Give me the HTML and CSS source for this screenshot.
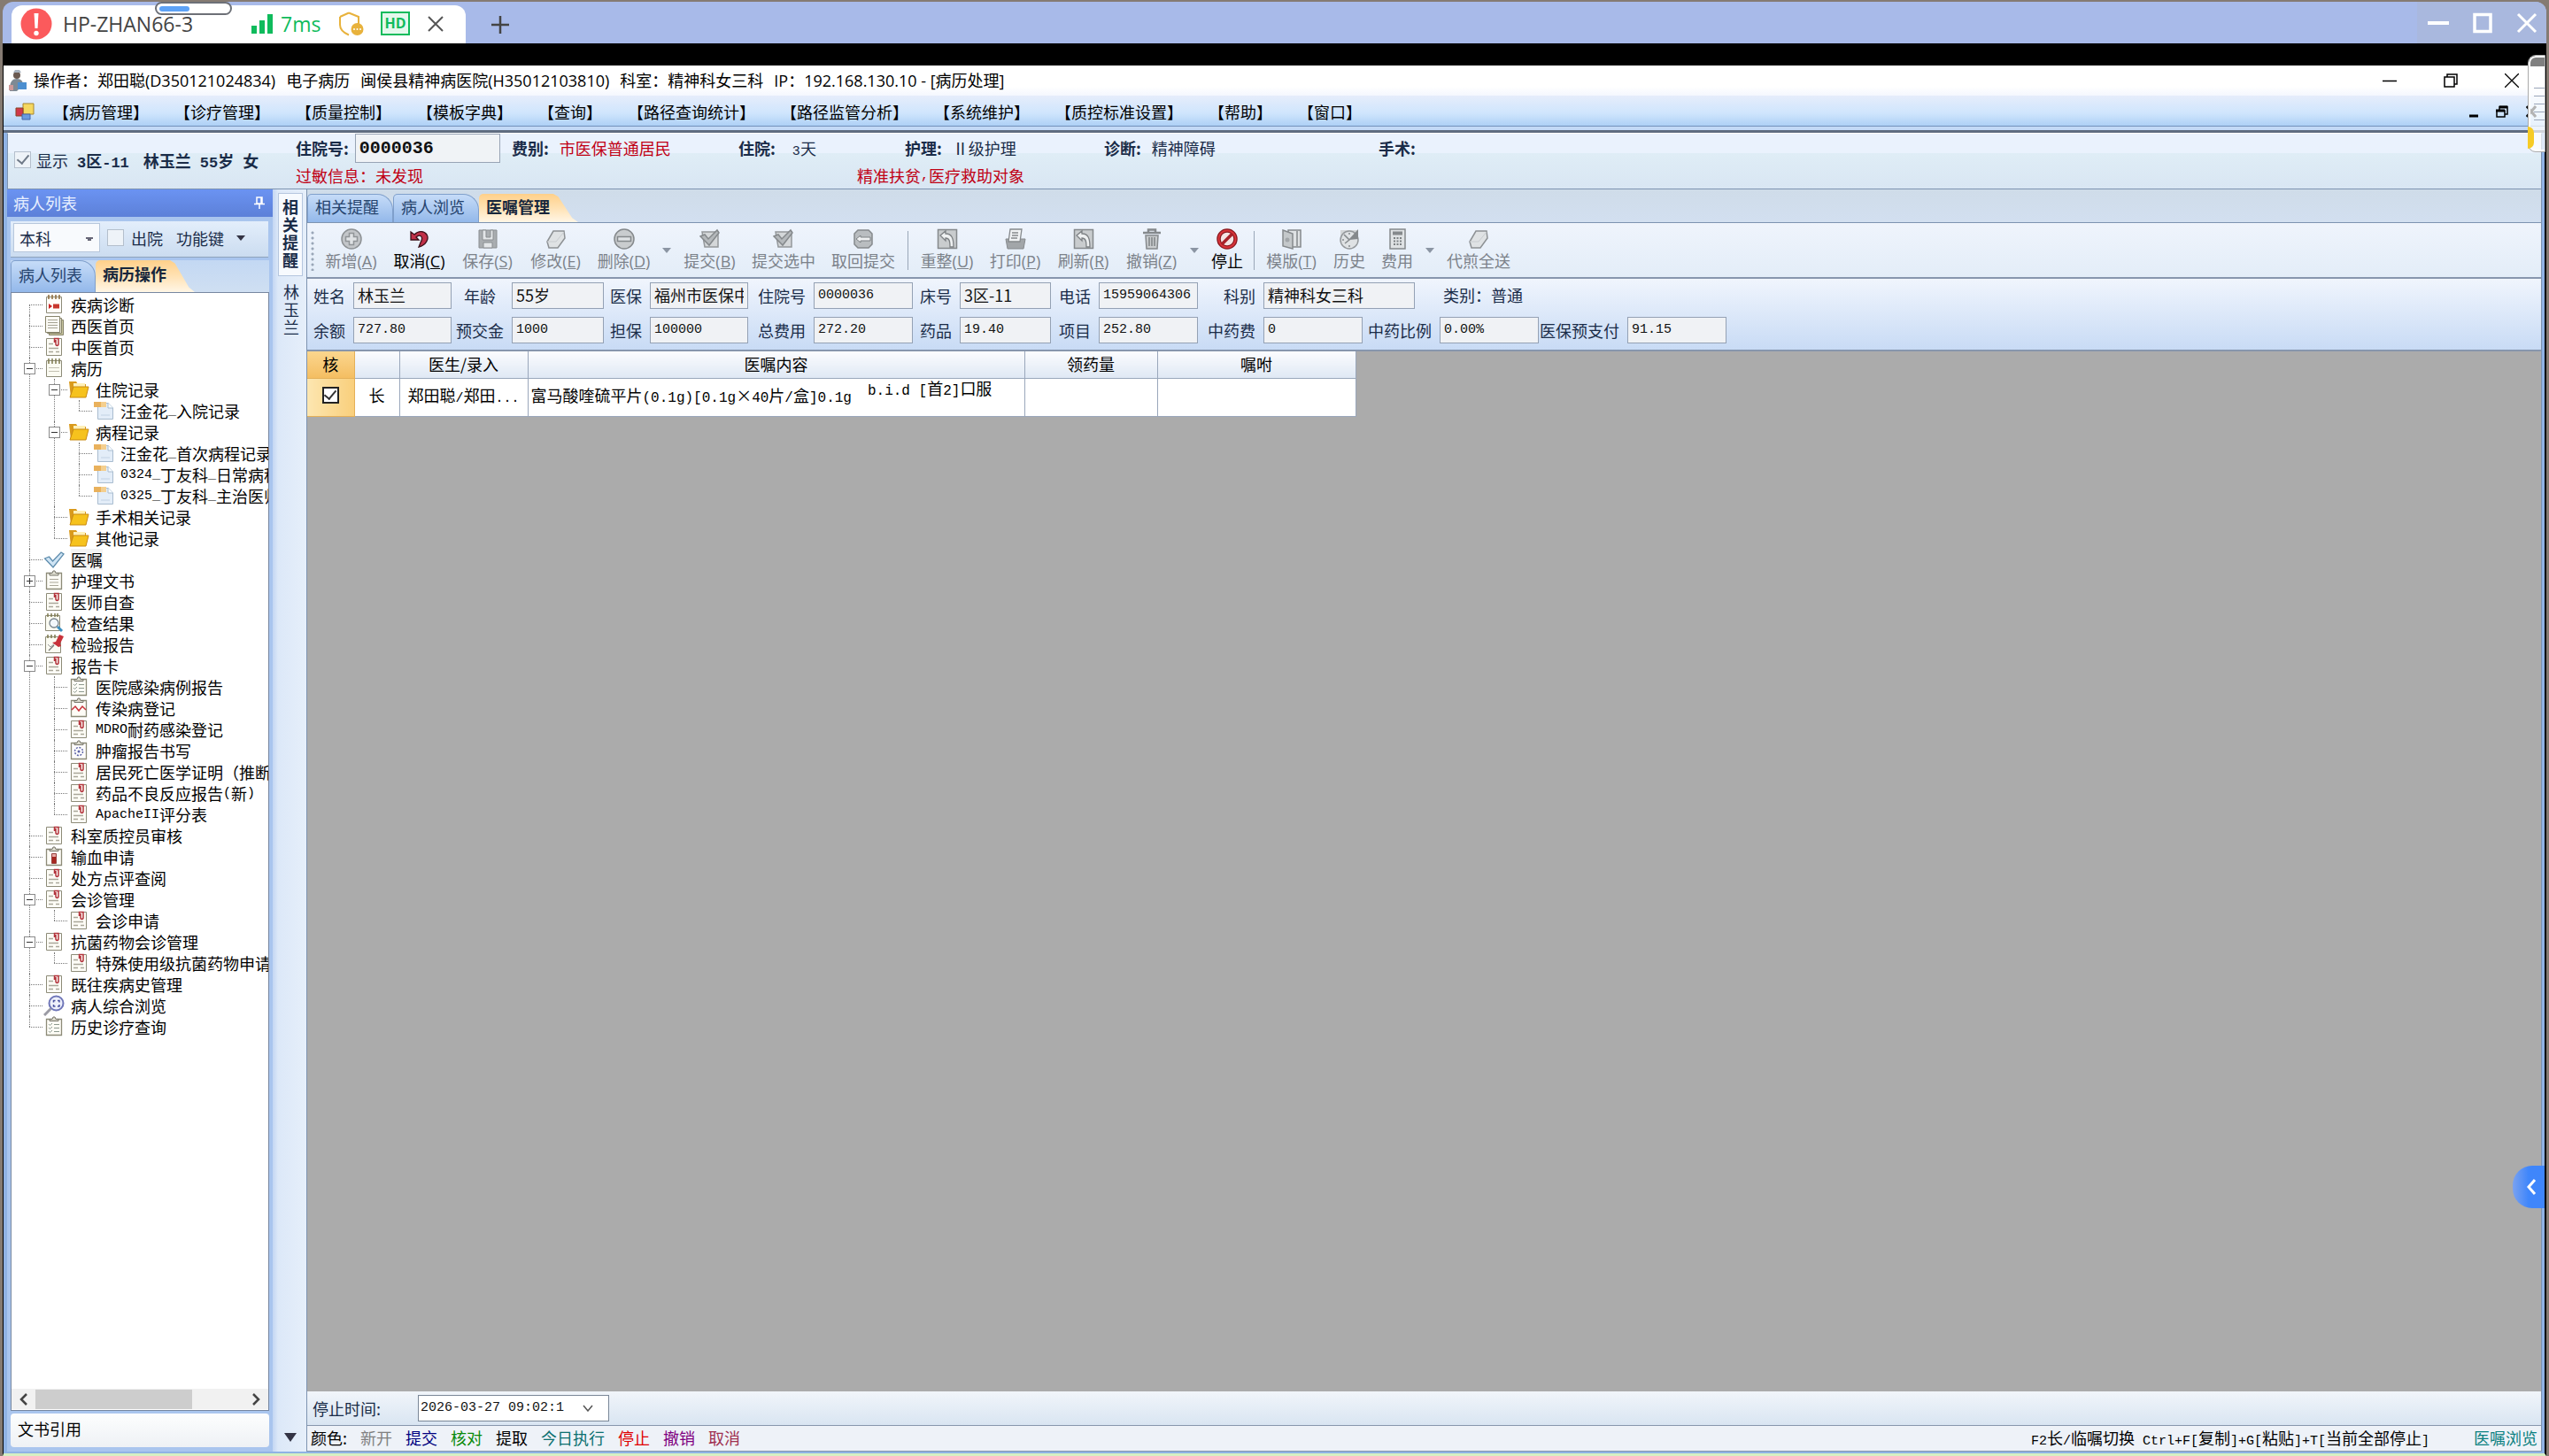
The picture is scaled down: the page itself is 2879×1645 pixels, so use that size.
FILE: index.html
```html
<!DOCTYPE html>
<html lang="zh-CN">
<head>
<meta charset="utf-8">
<title>电子病历 - 病历处理</title>
<link rel="stylesheet" href="styles.css">
</head>
<body>
<svg class="sprite" aria-hidden="true">
  <symbol id="i-diag" viewBox="0 0 24 24"><path d="M3.500 3.500h17v18h-17z" fill="#fffdf8" stroke="#8d8b78"/><path d="M6 1v5M10 1v5M14 1v5M18 1v5" stroke="#8a6a3a" stroke-width="1.500"/><path d="M6 11l4 3-4 3z" fill="#c22"/><path d="M11 11.500h7v5h-7z" fill="#c8382c"/></symbol>
  <symbol id="i-pages" viewBox="0 0 24 24"><path d="M6.500 5.500h16v17h-16z" fill="#c9c7a0" stroke="#86836a"/><path d="M4.500 3.500h16v17h-16z" fill="#e4e2cf" stroke="#86836a"/><path d="M2.500 1.500h16v18h-16z" fill="#fbfaf4" stroke="#86836a"/><path d="M5 5.500h11M5 8.500h11M5 11.500h11M5 14.500h11" stroke="#a5a293"/></symbol>
  <symbol id="i-clip" viewBox="0 0 24 24"><path d="M3.500 2.500h17v19h-17z" fill="#fdfcf6" stroke="#8d8b78"/><path d="M6 8.500h5M6 13.500h11M6 17.500h5M14 17.500h4" stroke="#aaa79a" stroke-width="1.500"/><path d="M12.500 7V2.500h4.500V8.500c0 2.500-3 2.500-3 0V4" fill="none" stroke="#b3343c" stroke-width="1.500"/></symbol>
  <symbol id="i-note" viewBox="0 0 24 24"><path d="M3.500 3.500h17v18h-17z" fill="#fbfbf2" stroke="#8d8b78"/><path d="M6 1v6M10 1v6M14 1v6M18 1v6" stroke="#7d7a4e" stroke-width="1.500"/><path d="M6 11.500h12M6 15.500h12" stroke="#c3c1b2"/></symbol>
  <symbol id="i-folder" viewBox="0 0 24 24"><path d="M1 3h8l2 3h9v5H6L3 21z" fill="#d99a1c"/><path d="M6 5h13v5H6z" fill="#fff0b8"/><path d="M6 9h17l-3 12H2z" fill="#f6c21d" stroke="#c98a10"/></symbol>
  <symbol id="i-doc" viewBox="0 0 24 24"><path d="M5.500 3.500h12l5 5v13h-17z" fill="#e3edf8" stroke="#a9bccf"/><path d="M17 3v6h6" fill="#f7fbff" stroke="#a9bccf"/><path d="M1 2h14v6H1z" fill="#e9b15c"/><path d="M9 2h6v6H9z" fill="#f4cf8f"/><path d="M9 17h10" stroke="#c2d2e4"/></symbol>
  <symbol id="i-check" viewBox="0 0 24 24"><path d="M1.500 11l5-2 4 5L20 4l3 2-12 15z" fill="#cfe4f4" stroke="#5d8cad" stroke-width="1.300"/></symbol>
  <symbol id="i-board" viewBox="0 0 24 24"><path d="M3.500 3.500h17v18h-17z" fill="#fdfcf6" stroke="#8d8b78" stroke-width="1.300"/><path d="M7 6V3.500h3l1-2.500h2l1 2.500h3V6z" fill="#deddd0" stroke="#77756a"/><path d="M7 10.500h10M7 14h10M7 17.500h10" stroke="#aaa79a"/></symbol>
  <symbol id="i-find" viewBox="0 0 24 24"><path d="M2.500 3.500h16v17h-16z" fill="#fbfbf2" stroke="#8d8b78"/><path d="M5 1v4M9 1v4M13 1v4M16 1v4" stroke="#7d7a4e" stroke-width="1.500"/><circle cx="12" cy="12" r="5" fill="#f2f7fb" stroke="#78838c" stroke-width="1.300"/><path d="M16 16l5 5" stroke="#3d8fbf" stroke-width="3"/></symbol>
  <symbol id="i-pin" viewBox="0 0 24 24"><path d="M2.500 3.500h17v18h-17z" fill="#fbfbf2" stroke="#8d8b78"/><path d="M5 1v4M9 1v4M13 1v4" stroke="#7d7a4e" stroke-width="1.500"/><path d="M5 12l3 3 5-4" fill="none" stroke="#999"/><path d="M6 19l6-6" stroke="#777" stroke-width="1.300"/><path d="M10 10l4-1 4-8 5 2-4 8 1 3-3 1z" fill="#c8323a"/></symbol>
  <symbol id="i-list" viewBox="0 0 24 24"><path d="M3.500 3.500h17v18h-17z" fill="#fdfcf6" stroke="#8d8b78" stroke-width="1.300"/><path d="M7 5.500V3.500h3l1-2.500h2l1 2.500h3v2z" fill="#deddd0" stroke="#77756a"/><path d="M12 9.500h6M12 13.500h6M12 17.500h6M6 9l1.500 1.500L10 8M6 13l1.500 1.500L10 12M6 17l1.500 1.500L10 16" fill="none" stroke="#8d9a90"/></symbol>
  <symbol id="i-wave" viewBox="0 0 24 24"><path d="M3.500 3.500h17v18h-17z" fill="#fdfcf6" stroke="#8d8b78" stroke-width="1.300"/><path d="M7 5.500V3.500h3l1-2.500h2l1 2.500h3v2z" fill="#deddd0" stroke="#77756a"/><path d="M4 14l4-4 4 5 4-5 4 4" fill="none" stroke="#c8323a" stroke-width="1.500"/></symbol>
  <symbol id="i-virus" viewBox="0 0 24 24"><path d="M3.500 3.500h17v18h-17z" fill="#fdfcfc" stroke="#8d8b78" stroke-width="1.300"/><path d="M7 5.500V3.500h3l1-2.500h2l1 2.500h3v2z" fill="#deddd0" stroke="#77756a"/><circle cx="12" cy="13" r="4.500" fill="none" stroke="#5d64a8" stroke-width="1.500" stroke-dasharray="2 1.500"/><circle cx="12" cy="13" r="1.500" fill="#5d64a8"/></symbol>
  <symbol id="i-blood" viewBox="0 0 24 24"><path d="M3.500 3.500h17v18h-17z" fill="#fdfcf6" stroke="#8d8b78" stroke-width="1.300"/><path d="M7 5.500V3.500h3l1-2.500h2l1 2.500h3v2z" fill="#deddd0" stroke="#77756a"/><path d="M9.500 8.500h5v11h-5z" fill="#e8a9a5" stroke="#96403c"/><path d="M10 12h4v7h-4z" fill="#a82620"/></symbol>
  <symbol id="i-lens" viewBox="0 0 24 24"><circle cx="14.500" cy="9.500" r="8" fill="#eef0fb" stroke="#6f76b8" stroke-width="2"/><path d="M8.500 15.500L1 23" stroke="#9a9aa4" stroke-width="3"/><path d="M11.500 8.500v-2h2M16 6.500h2v2M18 11v2h-2M13.500 13h-2v-2" fill="none" stroke="#4b53a0" stroke-width="1.500"/></symbol>
  <symbol id="i-add" viewBox="0 0 24 24"><circle cx="12" cy="12" r="11" fill="#c3c6c9" stroke="#8d9194" stroke-width="1.500"/><path d="M9.500 5.500h5v4h4v5h-4v4h-5v-4h-4v-5h4z" fill="#dfe2e4" stroke="#909497" stroke-width="1.500"/></symbol>
  <symbol id="i-undo" viewBox="0 0 24 24"><path d="M2 4v9h9l-3-3c4-4 9-1 5 6l-2 5c8-2 12-9 9-14-3-4-9-5-14 0z" fill="#c03048" stroke="#3b1018" stroke-width="1.300"/></symbol>
  <symbol id="i-save" viewBox="0 0 24 24"><path d="M2 2h20v20H2z" fill="#a9adb0" stroke="#8a8e91"/><path d="M6 2h4v8h5V2h3v11H6zM7 16h10v6H7z" fill="#e3e6e8" stroke="#8a8e91"/></symbol>
  <symbol id="i-erase" viewBox="0 0 24 24"><path d="M2 15l7-12h12l1 8-8 11H4z" fill="#dfe2e4" stroke="#8d9194" stroke-width="1.500"/><path d="M2 15h10l9-11" fill="none" stroke="#c9cdd0"/></symbol>
  <symbol id="i-minus" viewBox="0 0 24 24"><circle cx="12" cy="12" r="11" fill="#c9ccce" stroke="#85898c" stroke-width="1.500"/><path d="M4.500 9.500h15v5h-15z" fill="#dfe2e4" stroke="#85898c" stroke-width="1.500"/></symbol>
  <symbol id="i-submit" viewBox="0 0 24 24"><path d="M3 4h18v17H6z" fill="#d4d7d9" stroke="#94989b" stroke-width="1.500"/><path d="M1 9l5-2 4 5L20 2l2 3-11 14z" fill="#b4b8bb" stroke="#85898c" stroke-width="1.500"/></symbol>
  <symbol id="i-back" viewBox="0 0 24 24"><path d="M2 6l4-4h12l4 4v12l-4 4H6l-4-4z" fill="#b9bdc0" stroke="#85898c" stroke-width="1.500"/><path d="M4 12l5-4v2h11v4H9v2z" fill="#eef0f1" stroke="#7d8184"/></symbol>
  <symbol id="i-sheet" viewBox="0 0 24 24"><path d="M1.500 1.500h21v21h-21z" fill="#c9ccce" stroke="#85898c" stroke-width="1.500"/><path d="M4 8l6-5v3c7 0 9 5 9 15h-4c0-7-1-10-5-10v3z" fill="#eef0f1" stroke="#7d8184" stroke-width="1.300"/></symbol>
  <symbol id="i-print" viewBox="0 0 24 24"><path d="M1 12h22l-2 11H3z" fill="#a2a6a9" stroke="#85898c"/><path d="M6 1h13l-2 14H4z" fill="#f0f2f3" stroke="#85898c" stroke-width="1.300"/><path d="M8 5h7M8 8h7M7 11h7" stroke="#85898c" stroke-width="1.500"/></symbol>
  <symbol id="i-trash" viewBox="0 0 24 24"><path d="M2 5h20M8 4V1.500h8V4" fill="none" stroke="#85898c" stroke-width="2.500"/><path d="M5 8h14l-1 15H6z" fill="#c9ccce" stroke="#85898c" stroke-width="1.500"/><path d="M9 10v10M12 10v10M15 10v10" stroke="#7d8184" stroke-width="1.500"/></symbol>
  <symbol id="i-stop" viewBox="0 0 24 24"><circle cx="12" cy="12" r="9.500" fill="#f3e4e4" stroke="#8c1a20" stroke-width="4.500"/><circle cx="12" cy="12" r="9.500" fill="none" stroke="#d9343a" stroke-width="2"/><path d="M6 18L18 6" stroke="#a8222a" stroke-width="3.500"/></symbol>
  <symbol id="i-book" viewBox="0 0 24 24"><path d="M8 2h14v19H8z" fill="#dfe2e4" stroke="#85898c" stroke-width="1.500"/><path d="M2 2l11 4v17L2 20z" fill="#c4c8ca" stroke="#85898c" stroke-width="1.500"/><path d="M18 3v17" stroke="#85898c" stroke-width="1.500"/><circle cx="7" cy="13" r="2.500" fill="#a2a6a9"/></symbol>
  <symbol id="i-clock" viewBox="0 0 24 24"><path d="M2 2h20v14H2z" fill="#d4d7d9"/><circle cx="12" cy="13" r="10" fill="#dfe2e4" stroke="#94989b" stroke-width="1.500"/><path d="M11 13l11-12v11z" fill="#85898c"/><path d="M12 5v2M4 13h2M12 19v2M6 7l6 6-5 4" fill="none" stroke="#85898c" stroke-width="1.500"/></symbol>
  <symbol id="i-calc" viewBox="0 0 24 24"><path d="M4 1h17v22H4z" fill="#dfe2e4" stroke="#85898c" stroke-width="1.500"/><path d="M7 3.500h11v4H7z" fill="#85898c"/><path d="M8 11h9M8 14.500h9M8 18h9" stroke="#7d8184" stroke-width="2" stroke-dasharray="2 1.500"/></symbol>
</svg>

<div class="client">
  <header class="tabbar">
    <div class="session">
      <svg class="alert" viewBox="0 0 36 36"><circle cx="18" cy="18" r="17.500" fill="#fb5a5c"/><path d="M15.500 6h5l-1 17h-3z" fill="#fff"/><circle cx="18" cy="28.500" r="2.700" fill="#fff"/></svg>
      <span class="session-name">HP-ZHAN66-3</span>
      <svg class="signal" viewBox="0 0 24 22"><path d="M0 13h6v9H0zM9 7h6v15H9zM18 0h6v22h-6z" fill="#0fbb5c"/></svg>
      <span class="ping">7ms</span>
      <svg class="shield" viewBox="0 0 30 28"><path d="M12 1.500L23 6v9M2 6l10-4.500M2 6v9c0 6 4 9 10 11.500" fill="none" stroke="#e8b23c" stroke-width="2"/><circle cx="21.500" cy="20" r="7" fill="#e8b23c"/><circle cx="18" cy="20" r="1" fill="#fff"/><circle cx="21.500" cy="20" r="1" fill="#fff"/><circle cx="25" cy="20" r="1" fill="#fff"/></svg>
      <span class="hd">HD</span>
      <button class="plain" aria-label="关闭"><svg width="18" height="18" viewBox="0 0 18 18"><path d="M1 1l16 16M17 1L1 17" stroke="#555" stroke-width="2"/></svg></button>
    </div>
    <button class="plain newtab" aria-label="新建"><svg width="22" height="22" viewBox="0 0 22 22"><path d="M11 1v20M1 11h20" stroke="#444" stroke-width="2.500"/></svg></button>
    <div class="wincontrols">
      <button class="plain" aria-label="最小化"><svg width="24" height="24" viewBox="0 0 24 24"><path d="M0 12h24" stroke="#fff" stroke-width="4"/></svg></button>
      <button class="plain" aria-label="最大化"><svg width="24" height="24" viewBox="0 0 24 24"><path d="M3 2.500h18v19H3z" fill="none" stroke="#fff" stroke-width="3.500"/></svg></button>
      <button class="plain" aria-label="关闭窗口"><svg width="24" height="24" viewBox="0 0 24 24"><path d="M2 2l20 20M22 2L2 22" stroke="#fff" stroke-width="3"/></svg></button>
    </div>
    <div class="pill"><i></i></div>
  </header>

  <div class="remote">
    <div class="titlebar">
      <svg width="22" height="24" viewBox="0 0 22 24"><circle cx="10" cy="6" r="4" fill="#6b5a50"/><path d="M6 3h9l-2-3H8z" fill="#a9b4c0"/><path d="M2 22c0-9 3-12 8-12s7 3 7 7l-7 7H2z" fill="#7e8a94"/><path d="M11 14h10v8H11z" fill="#4c8fd0"/><path d="M1 17h5v6H1z" fill="#c99"/></svg>
      <h1><span>操作者：郑田聪(D350121024834)</span><span>电子病历</span><span>闽侯县精神病医院(H35012103810)</span><span>科室：精神科女三科</span><span>IP：192.168.130.10 - [病历处理]</span></h1>
      <div class="appcontrols">
        <button class="plain" aria-label="最小化"><svg width="16" height="16" viewBox="0 0 16 16"><path d="M0 8.500h16" stroke="#000" stroke-width="1.500"/></svg></button>
        <button class="plain" aria-label="还原"><svg width="16" height="16" viewBox="0 0 16 16"><path d="M1 4h11v11H1zM4 4V1h11v11h-3" fill="none" stroke="#000" stroke-width="1.500"/></svg></button>
        <button class="plain" aria-label="关闭"><svg width="16" height="16" viewBox="0 0 16 16"><path d="M0 0l16 16M16 0L0 16" stroke="#000" stroke-width="1.300"/></svg></button>
      </div>
    </div>

    <nav class="menubar">
      <svg width="22" height="20" viewBox="0 0 22 20"><path d="M9 1h12v12H9z" fill="#f5d860" stroke="#a8862c"/><path d="M1 6h8v9H1z" fill="#d0384a" stroke="#842"/><path d="M8 13h9v6H8z" fill="#6a9be0" stroke="#46a"/></svg>
      <button>【病历管理】</button><button>【诊疗管理】</button><button>【质量控制】</button><button>【模板字典】</button><button>【查询】</button><button>【路径查询统计】</button><button>【路径监管分析】</button><button>【系统维护】</button><button>【质控标准设置】</button><button>【帮助】</button><button>【窗口】</button>
      <div class="mdi">
        <svg width="10" height="14" viewBox="0 0 10 14"><path d="M0 12h10" stroke="#000" stroke-width="3"/></svg>
        <svg width="14" height="14" viewBox="0 0 14 14"><path d="M1 6h9v7H1zM4 6V1.500h9V10h-3" fill="none" stroke="#000" stroke-width="1.500"/><path d="M0 6h10M4 2h9" stroke="#000" stroke-width="3"/></svg>
        <svg width="12" height="14" viewBox="0 0 12 14"><path d="M1 1l10 12M11 1L1 13" stroke="#000" stroke-width="3"/></svg>
      </div>
    </nav>

    <section class="patient">
      <div class="who">
        <label><input type="checkbox" class="tick dim" checked> 显示</label>
        <b><span class="n">3</span>区<span class="n">-11</span></b><b>林玉兰</b><b><span class="n">55</span>岁</b><b>女</b>
      </div>
      <div class="facts">
        <div><label for="adm"><b>住院号:</b></label><input id="adm" class="adm" value="0000036"></div>
        <div><b>费别:</b><span class="red">市医保普通居民</span></div>
        <div><b>住院:</b><span class="stay"><span class="n">3</span>天</span></div>
        <div><b>护理:</b><span>Ⅱ级护理</span></div>
        <div><b>诊断:</b><span>精神障碍</span></div>
        <div><b>手术:</b></div>
        <div class="allergy red">过敏信息：未发现</div>
        <div class="aid red">精准扶贫<span class="n">,</span>医疗救助对象</div>
      </div>
    </section>

    <div class="work">
      <aside class="side">
        <div class="side-title"><span>病人列表</span><svg width="12" height="14" viewBox="0 0 12 14"><path d="M3 1h6v7H3zM0 8.500h12M6 9v5M8 1v7" fill="none" stroke="#fff" stroke-width="1.500"/></svg></div>
        <div class="side-tools">
          <select aria-label="科室"><option>本科</option></select>
          <label><input type="checkbox" class="tick dim"> 出院</label>
          <button class="fn">功能键<i class="tri"></i></button>
        </div>
        <div class="tabs side-tabs"><button class="tab">病人列表</button><button class="tab on">病历操作</button></div>
        <div class="treebox">
          <ul class="tree">
            <li><span class="row"><svg><use href="#i-diag"/></svg>疾病诊断</span></li>
            <li><span class="row"><svg><use href="#i-pages"/></svg>西医首页</span></li>
            <li><span class="row"><svg><use href="#i-clip"/></svg>中医首页</span></li>
            <li><button class="tg" aria-label="折叠"></button><span class="row"><svg><use href="#i-note"/></svg>病历</span>
              <ul>
                <li><button class="tg" aria-label="折叠"></button><span class="row"><svg><use href="#i-folder"/></svg>住院记录</span>
                  <ul><li><span class="row"><svg><use href="#i-doc"/></svg>汪金花<span class="n">_</span>入院记录</span></li></ul></li>
                <li><button class="tg" aria-label="折叠"></button><span class="row"><svg><use href="#i-folder"/></svg>病程记录</span>
                  <ul>
                    <li><span class="row"><svg><use href="#i-doc"/></svg>汪金花<span class="n">_</span>首次病程记录</span></li>
                    <li><span class="row"><svg><use href="#i-doc"/></svg><span class="n">0324_</span>丁友科<span class="n">_</span>日常病程</span></li>
                    <li><span class="row"><svg><use href="#i-doc"/></svg><span class="n">0325_</span>丁友科<span class="n">_</span>主治医师</span></li>
                  </ul></li>
                <li><span class="row"><svg><use href="#i-folder"/></svg>手术相关记录</span></li>
                <li><span class="row"><svg><use href="#i-folder"/></svg>其他记录</span></li>
              </ul></li>
            <li><span class="row"><svg><use href="#i-check"/></svg><span class="cur">医嘱</span></span></li>
            <li><button class="tg plus" aria-label="展开"></button><span class="row"><svg><use href="#i-board"/></svg>护理文书</span></li>
            <li><span class="row"><svg><use href="#i-clip"/></svg>医师自查</span></li>
            <li><span class="row"><svg><use href="#i-find"/></svg>检查结果</span></li>
            <li><span class="row"><svg><use href="#i-pin"/></svg>检验报告</span></li>
            <li><button class="tg" aria-label="折叠"></button><span class="row"><svg><use href="#i-clip"/></svg>报告卡</span>
              <ul>
                <li><span class="row"><svg><use href="#i-list"/></svg>医院感染病例报告</span></li>
                <li><span class="row"><svg><use href="#i-wave"/></svg>传染病登记</span></li>
                <li><span class="row"><svg><use href="#i-clip"/></svg><span class="n">MDRO</span>耐药感染登记</span></li>
                <li><span class="row"><svg><use href="#i-virus"/></svg>肿瘤报告书写</span></li>
                <li><span class="row"><svg><use href="#i-clip"/></svg>居民死亡医学证明（推断</span></li>
                <li><span class="row"><svg><use href="#i-clip"/></svg>药品不良反应报告<span class="n">(</span>新<span class="n">)</span></span></li>
                <li><span class="row"><svg><use href="#i-clip"/></svg><span class="n">ApacheII</span>评分表</span></li>
              </ul></li>
            <li><span class="row"><svg><use href="#i-clip"/></svg>科室质控员审核</span></li>
            <li><span class="row"><svg><use href="#i-blood"/></svg>输血申请</span></li>
            <li><span class="row"><svg><use href="#i-clip"/></svg>处方点评查阅</span></li>
            <li><button class="tg" aria-label="折叠"></button><span class="row"><svg><use href="#i-clip"/></svg>会诊管理</span>
              <ul><li><span class="row"><svg><use href="#i-clip"/></svg>会诊申请</span></li></ul></li>
            <li><button class="tg" aria-label="折叠"></button><span class="row"><svg><use href="#i-clip"/></svg>抗菌药物会诊管理</span>
              <ul><li><span class="row"><svg><use href="#i-clip"/></svg>特殊使用级抗菌药物申请</span></li></ul></li>
            <li><span class="row"><svg><use href="#i-clip"/></svg>既往疾病史管理</span></li>
            <li><span class="row"><svg><use href="#i-lens"/></svg>病人综合浏览</span></li>
            <li><span class="row"><svg><use href="#i-list"/></svg>历史诊疗查询</span></li>
          </ul>
          <div class="hscroll">
            <svg width="10" height="14" viewBox="0 0 10 14"><path d="M8 1L2 7l6 6" fill="none" stroke="#444" stroke-width="2.500"/></svg>
            <div class="track"><i></i></div>
            <svg width="10" height="14" viewBox="0 0 10 14"><path d="M2 1l6 6-6 6" fill="none" stroke="#444" stroke-width="2.500"/></svg>
          </div>
        </div>
        <button class="docref">文书引用</button>
      </aside>

      <div class="rail">
        <button class="vtab on">相关提醒</button>
        <button class="vtab">林玉兰</button>
        <i class="tri big"></i>
      </div>

      <main>
        <div class="tabs main-tabs"><button class="tab">相关提醒</button><button class="tab">病人浏览</button><button class="tab on">医嘱管理</button></div>
        <div class="toolbar">
          <i class="grip"></i>
          <button disabled><svg><use href="#i-add"/></svg>新增(<u>A</u>)</button>
          <button><svg><use href="#i-undo"/></svg>取消(<u>C</u>)</button>
          <button disabled><svg><use href="#i-save"/></svg>保存(<u>S</u>)</button>
          <button disabled><svg><use href="#i-erase"/></svg>修改(<u>E</u>)</button>
          <button disabled><svg><use href="#i-minus"/></svg>删除(<u>D</u>)</button>
          <i class="tri drop"></i>
          <button disabled><svg><use href="#i-submit"/></svg>提交(<u>B</u>)</button>
          <button disabled class="wide"><svg><use href="#i-submit"/></svg>提交选中</button>
          <button disabled class="wide"><svg><use href="#i-back"/></svg>取回提交</button>
          <i class="sep roomy"></i>
          <button disabled><svg><use href="#i-sheet"/></svg>重整(<u>U</u>)</button>
          <button disabled><svg><use href="#i-print"/></svg>打印(<u>P</u>)</button>
          <button disabled><svg><use href="#i-sheet"/></svg>刷新(<u>R</u>)</button>
          <button disabled><svg><use href="#i-trash"/></svg>撤销(<u>Z</u>)</button>
          <i class="tri drop"></i>
          <button class="slim"><svg><use href="#i-stop"/></svg>停止</button>
          <i class="sep"></i>
          <button disabled><svg><use href="#i-book"/></svg>模版(<u>T</u>)</button>
          <button disabled class="slim"><svg><use href="#i-clock"/></svg>历史</button>
          <button disabled class="slim"><svg><use href="#i-calc"/></svg>费用</button>
          <i class="tri drop"></i>
          <button disabled class="wide"><svg><use href="#i-erase"/></svg>代煎全送</button>
        </div>

        <form class="form">
          <label for="f1">姓名</label><input id="f1" class="cjk" value="林玉兰">
          <label for="f2" class="age">年龄</label><input id="f2" class="cjk" value="55岁">
          <label for="f3">医保</label><input id="f3" class="cjk" value="福州市医保中心">
          <label for="f4">住院号</label><input id="f4" value="0000036">
          <label for="f5">床号</label><input id="f5" class="cjk" value="3区-11">
          <label for="f6">电话</label><input id="f6" value="15959064306">
          <label for="f7">科别</label><input id="f7" class="cjk dept" value="精神科女三科">
          <span class="kind">类别：普通</span>
          <label for="g1">余额</label><input id="g1" value="727.80">
          <label for="g2">预交金</label><input id="g2" value="1000">
          <label for="g3">担保</label><input id="g3" value="100000">
          <label for="g4">总费用</label><input id="g4" value="272.20">
          <label for="g5">药品</label><input id="g5" value="19.40">
          <label for="g6">项目</label><input id="g6" value="252.80">
          <label for="g7">中药费</label><input id="g7" value="0">
          <label for="g8">中药比例</label><input id="g8" value="0.00%">
          <label for="g9">医保预支付</label><input id="g9" value="91.15">
        </form>

        <div class="gridarea">
          <table>
            <colgroup><col class="c1"><col class="c2"><col class="c3"><col class="c4"><col class="c5"><col class="c6"></colgroup>
            <thead><tr><th class="hot">核</th><th></th><th>医生/录入</th><th>医嘱内容</th><th>领药量</th><th>嘱咐</th></tr></thead>
            <tbody><tr>
              <td class="hot"><input type="checkbox" class="tick" aria-label="核" checked></td>
              <td>长</td>
              <td>郑田聪<span class="n">/</span>郑田<span class="n">...</span></td>
              <td class="rx"><div class="rxline"><span>富马酸喹硫平片<span class="n">(0.1g)[0.1g</span>×<span class="n">40</span>片<span class="n">/</span>盒<span class="n">]0.1g</span></span><span class="freq"><span class="n">b.i.d [</span>首<span class="n">2]</span>口服</span></div></td>
              <td></td><td></td>
            </tr></tbody>
          </table>
        </div>

        <div class="stopbar">
          <label for="stop">停止时间:</label>
          <div class="picker"><input id="stop" value="2026-03-27 09:02:1"><button type="button" class="plain" aria-label="选择时间"><svg width="12" height="8" viewBox="0 0 12 8"><path d="M1 1l5 6 5-6" fill="none" stroke="#555" stroke-width="1.500"/></svg></button></div>
        </div>
        <footer class="legend">
          <span>颜色:</span><span class="k1">新开</span><span class="k2">提交</span><span class="k3">核对</span><span class="k4">提取</span><span class="k5">今日执行</span><span class="k6">停止</span><span class="k7">撤销</span><span class="k8">取消</span>
          <span class="keys"><span class="n">F2</span>长<span class="n">/</span>临嘱切换<span class="n"> Ctrl+F[</span>复制<span class="n">]+G[</span>粘贴<span class="n">]+T[</span>当前全部停止<span class="n">]</span></span>
          <a href="#">医嘱浏览</a>
        </footer>
      </main>
    </div>
    <div class="floatbar"><i></i><i></i><i></i><i></i><i></i></div>
    <div class="dot"></div>
    <button class="drawer" aria-label="展开"><svg width="12" height="20" viewBox="0 0 12 20"><path d="M10 2L3 10l7 8" fill="none" stroke="#fff" stroke-width="3"/></svg></button>
  </div>
</div>
</body>
</html>
```

FILE: styles.css
```css
* { box-sizing: border-box; }
body {
  margin: 0;
  padding: 2px 3px 0 3px;
  min-height: 100vh;
  display: flex;
  background: #857b72;
  color: #000;
  font: 18px/24px "Noto Sans CJK SC", sans-serif;
}
button, input, select { font: inherit; color: inherit; }
button { border: 0; background: none; padding: 0; white-space: nowrap; }
input { min-width: 0; }
svg { display: block; flex: none; }
.sprite { position: absolute; width: 0; height: 0; }
.plain { display: flex; }
.n { font: 15px/1 "Liberation Mono", monospace; white-space: pre; }
b .n { font-size: 17px; font-weight: bold; }
.red { color: #c00014; }

.client { flex: 1; min-width: 0; display: flex; flex-direction: column; }

/* session tabs */
.tabbar {
  position: relative;
  display: flex;
  align-items: stretch;
  height: 47px;
  padding: 4px 0 0 10px;
  border-radius: 12px 12px 0 0;
  background: #a8bae9;
}
.session {
  display: flex;
  align-items: center;
  width: 513px;
  padding: 0 25px 2px 10px;
  border-radius: 12px 12px 0 0;
  background: #fff;
  font: 23px/30px "Open Sans", sans-serif;
}
.alert { width: 36px; height: 36px; }
.session-name { margin-left: 12px; color: #444; width: 213px; }
.signal { width: 24px; height: 22px; }
.ping { margin-left: 9px; width: 65px; color: #0fbb5c; }
.shield { width: 30px; height: 28px; }
.hd {
  margin: 0 20px 0 18px;
  width: 33px;
  height: 27px;
  border: 2px solid #0fbb5c;
  background: #e4f8ec;
  color: #0fbb5c;
  font: bold 16px/23px "Open Sans", sans-serif;
  text-align: center;
}
.newtab { align-self: center; margin-left: 28px; }
.wincontrols {
  display: flex;
  align-items: center;
  gap: 26px;
  margin: -4px 0 0 auto;
  padding: 0 10px 0 12px;
  border-top-right-radius: 12px;
  background: #a9b8de;
}
.pill {
  position: absolute;
  left: 172px;
  top: 0;
  width: 87px;
  height: 15px;
  padding: 3px;
  border: 2px solid #6d7077;
  border-radius: 8px;
  background: #fff;
}
.pill i { display: block; width: 34px; height: 6px; border-radius: 3px; background: #5da2f6; }

/* remote desktop */
.remote {
  position: relative;
  flex: 1;
  display: flex;
  flex-direction: column;
  padding: 25px 0 2px;
  border: solid #000;
  border-width: 0 2px 0 1px;
  background: linear-gradient(#000 25px, transparent 25px), #8fb2e4;
  border-bottom: 3px solid #d6efc2;
}
.titlebar {
  display: flex;
  align-items: center;
  height: 34px;
  padding: 0 29px 0 5px;
  background: linear-gradient(#fff 70%, #f4f7fe);
}
.titlebar h1 {
  display: flex;
  gap: 12px;
  margin: 0 0 0 7px;
  font: 18px/24px "Open Sans", "Noto Sans CJK SC", sans-serif;
}
.appcontrols { display: flex; gap: 53px; margin-left: auto; }
.menubar {
  display: flex;
  align-items: center;
  gap: 29px;
  height: 42px;
  padding: 0 9px 4px 13px;
  border-bottom: 3px solid #5f6c80;
  background: linear-gradient(#e6edfb, #cfe5fd 20px, #aed0f6 34px, #7391bb 34px, #7391bb 35px, #c3d9f6 35px);
}
.menubar > svg { margin-right: -8px; }
.mdi { display: flex; gap: 20px; margin-left: auto; }

.patient {
  display: flex;
  align-items: center;
  height: 64px;
  margin: 0 3px 0 4px;
  padding-bottom: 1px;
  border: 1px solid #7d93b0;
  border-top-color: #fff;
  background: linear-gradient(#eaf2fd 35%, #dfedf6 36%, #d9e6f3);
  color: #1a2c48;
}
.who { display: flex; gap: 10px; width: 325px; padding: 0 0 2px 7px; }
.who b:nth-of-type(2) { margin-left: 6px; }
label { display: flex; align-items: center; gap: 8px; white-space: nowrap; }
.who label { gap: 6px; }
.facts {
  flex: 1;
  display: grid;
  grid-template-columns: 244px 256px 188px 225px 310px 1fr;
  grid-template-rows: 33px 29px;
}
.facts > div { display: flex; align-items: center; gap: 12px; white-space: nowrap; }
.facts label { gap: 0; }
.stay { margin-left: 7px; }
.facts > div:first-child { gap: 7px; }
.allergy { grid-column: span 2; }
.facts > .aid { grid-column: 3 / -1; gap: 0; padding-left: 134px; }
.adm {
  width: 164px;
  height: 33px;
  padding: 0 4px;
  border: 1px solid #98a4b5;
  background: #f0f3f6;
  color: #111;
  font: bold 20px/24px "Liberation Mono", monospace;
}

.tick {
  appearance: none;
  display: grid;
  place-items: center;
  width: 19px;
  height: 19px;
  margin: 0;
  border: 2px solid #222;
  background: #fff;
}
.tick:checked::after {
  content: "";
  width: 6px;
  height: 11px;
  margin-top: -4px;
  border: solid #333;
  border-width: 0 2px 2px 0;
  transform: rotate(40deg);
}
.tick.dim { border: 1px solid #b4bfcc; background: #eef3f8; }
.tick.dim::after { border-color: #6f7a88; }

/* panes */
.work { flex: 1; display: flex; min-height: 0; margin: 0 3px 0 4px; }
.side {
  display: flex;
  flex-direction: column;
  width: 300px;
  padding-bottom: 5px;
  background: #a9c5ee;
}
.side-title {
  display: flex;
  align-items: center;
  justify-content: space-between;
  height: 31px;
  padding: 0 9px 1px 7px;
  background: linear-gradient(#6b93f2, #5c80d8);
  color: #e8f0ff;
}
.side-tools {
  display: flex;
  align-items: center;
  height: 46px;
  margin: 0 5px 0 4px;
  padding: 5px 0 3px 3px;
  border-bottom: 1px solid #8fa3bd;
  background: linear-gradient(#a9c5ee 5px, #e3eefb 5px, #cbdcf0);
  color: #1a2c48;
}
.side-tools select {
  appearance: none;
  width: 98px;
  height: 33px;
  padding: 0 6px;
  border: 1px solid #b7c7dc;
  border-radius: 0;
  background: linear-gradient(#667, #667) no-repeat 81px 15px / 8px 2px, linear-gradient(#667, #667) no-repeat 83px 17px / 4px 2px, #f8fafd;
}
.side-tools label { margin-left: 8px; gap: 8px; }
.fn { display: flex; align-items: center; gap: 14px; margin-left: 15px; }
.tri { display: block; border: solid transparent; border-width: 6px 5px 0; border-top-color: #334; }
.tri.big { margin: auto auto 11px; border-width: 10px 7px 0; }
.tabs { display: flex; }
.tab {
  height: 33px;
  border: 1px solid #7f9fcb;
  border-bottom: 0;
  border-radius: 5px 18px 0 0;
  background: linear-gradient(#c6dcf8, #93b8ea);
  color: #26446e;
  text-align: left;
  padding: 0 8px 3px;
}
.tab.on {
  border: 0;
  padding-right: 28px;
  clip-path: polygon(0 0, 75% 0, 80% 10%, 94% 85%, 100% 100%, 0 100%);
  background: linear-gradient(#ffd08a, #ffe2b4 50%, #fff6e6);
  color: #16263c;
  font-weight: bold;
}
.side-tabs { margin: 3px 4px 0; background: linear-gradient(#c3d8f3, #cfdff2); height: 36px; }
.side-tabs .tab { width: 96px; height: 36px; padding-bottom: 6px; }
.side-tabs .tab.on { width: 112px; }
.treebox {
  flex: 1;
  display: flex;
  flex-direction: column;
  margin: 0 4px;
  padding: 1px 0;
  border: 1px solid #7787a0;
  background: #fff;
}
ul { list-style: none; margin: 0; padding: 0; }
.tree { flex: 1; padding-left: 8px; overflow: hidden; }
.tree li { position: relative; padding-left: 28px; }
.tree li::before {
  content: "";
  position: absolute;
  left: 12px;
  top: 0;
  bottom: 0;
  border-left: 1px dotted #777;
}
.tree > li:first-child::before { top: 12px; }
.tree li:last-child::before { bottom: auto; height: 12px; }
.tree li::after {
  content: "";
  position: absolute;
  left: 12px;
  top: 12px;
  width: 15px;
  border-top: 1px dotted #777;
}
.row { display: flex; align-items: center; height: 24px; white-space: nowrap; }
.row > svg { width: 24px; height: 24px; margin-right: 7px; }
.cur { background: #f3f3f3; }
.tg {
  position: absolute;
  z-index: 1;
  left: 6px;
  top: 6px;
  width: 13px;
  height: 13px;
  border: 1px solid #8a8a8a;
  background: linear-gradient(#333, #333) no-repeat center / 7px 1px, #fff;
}
.tg.plus { background: linear-gradient(#333, #333) no-repeat center / 7px 1px, linear-gradient(#333, #333) no-repeat center / 1px 7px, #fff; }
.hscroll { display: flex; align-items: center; gap: 8px; height: 23px; padding: 0 9px; background: #f1f1f1; }
.track { flex: 1; }
.track i { display: block; width: 75%; height: 22px; background: #cdcdcd; }
.docref {
  height: 38px;
  margin: 3px 4px 0;
  padding: 0 0 4px 8px;
  border-radius: 4px;
  background: linear-gradient(#fdfefe, #eef1f5);
  text-align: left;
}
.rail {
  display: flex;
  flex-direction: column;
  width: 38px;
  padding: 4px 4px 0 6px;
  background: linear-gradient(90deg, #c3d6f3, #dce8f8 6px, #e6effa);
}
.vtab {
  width: 28px;
  padding: 0 5px;
  border: 1px solid #b5c6df;
  line-height: 20px;
  white-space: normal;
  overflow-wrap: anywhere;
  color: #1a2c48;
}
.vtab.on { padding: 0 4px 5px; height: 94px; background: #f7fafe; font-weight: bold; }
.vtab:not(.on) { padding-top: 6px; border-color: transparent; }

main { flex: 1; min-width: 0; display: flex; flex-direction: column; border-left: 1px solid #7d93b0; border-right: 1px solid #7d93b0; }
.main-tabs { height: 38px; padding-top: 5px; border-bottom: 1px solid #7d93b0; background: linear-gradient(#cfdce9, #d2dff0); }
.main-tabs .tab { width: 97px; height: 32px; padding-bottom: 5px; }
.main-tabs .tab.on { width: 112px; }
.toolbar {
  display: flex;
  align-items: center;
  height: 63px;
  padding-left: 4px;
  border-bottom: 2px solid #8796ad;
  background: linear-gradient(#eff4fc, #e3edf8);
}
.toolbar button {
  width: 77px;
  color: #000;
  font: 18px/24px "Open Sans", "Noto Sans CJK SC", sans-serif;
}
.toolbar button:disabled { color: #7c828a; }
.toolbar button svg { width: 24px; height: 24px; margin: 0 auto 1px; }
.toolbar .wide { width: 90px; }
.toolbar .slim { width: 54px; }
.grip { width: 7px; height: 46px; background: radial-gradient(circle, #9aa7b8 1px, transparent 2px) 0 0 / 4px 6px repeat-y; }
.sep { width: 1px; height: 44px; margin: 0 3px; background: #9aa7b8; }
.sep.roomy { margin: 0 5px; }
.tri.drop { margin: 0 5px; border-top-color: #8b95a3; }

.form {
  display: grid;
  grid-template-columns: 52px 111px 68px 104px 52px 111px 74px 112px 53px 103px 54px 112px 74px 112px 87px 112px 100px 112px;
  grid-template-rows: 30px 30px;
  row-gap: 9px;
  padding: 4px 0 7px;
  border-bottom: 2px solid #8796ad;
  background: linear-gradient(#f0f5fd, #c8dbf5);
  color: #1a2c48;
}
.form label { justify-content: flex-end; padding-right: 9px; }
.form .age { padding-right: 18px; }
.form input {
  width: 100%;
  height: 30px;
  padding: 0 4px 1px;
  border: 1px solid #94a1b4;
  border-radius: 0;
  background: #f0f2f5;
  color: #111;
  font: 15px/20px "Liberation Mono", monospace;
}
.form .cjk { padding-bottom: 3px; font: 18px/24px "Noto Sans CJK SC", sans-serif; }
.form .dept { grid-column: span 2; width: 171px; }
.kind { grid-column: span 3; padding: 2px 0 0 4px; }

.gridarea { flex: 1; background: #ababab; }
table { border-collapse: collapse; table-layout: fixed; width: 1184px; background: #fff; }
.c1 { width: 53px; } .c2 { width: 51px; } .c3 { width: 145px; } .c4 { width: 561px; } .c5 { width: 150px; } .c6 { width: 224px; }
th, td { padding: 0 0 2px; border: solid #9aa7bb; border-width: 0 1px 1px 0; text-align: center; white-space: nowrap; }
th { height: 30px; font-weight: normal; background: linear-gradient(#fbfcfe, #dfe8f4); }
td { height: 43px; padding-bottom: 5px; }
.hot { background: linear-gradient(#fbd68e, #f4be62); border-color: #e4b058; }
td.hot { background: linear-gradient(90deg, #fce6b0, #f9cf7c); }
td .tick { margin: 0 auto; }
.rx { text-align: left; padding-left: 3px; }
.rx .n { font-size: 16px; }
.rxline { display: flex; gap: 18px; }
.freq { margin-top: -8px; }

.stopbar {
  display: flex;
  align-items: center;
  gap: 42px;
  height: 38px;
  padding: 0 0 1px 6px;
  background: linear-gradient(#f1f5fa, #d9e5f2);
  color: #1a2c48;
}
.picker {
  display: flex;
  align-items: center;
  width: 216px;
  height: 30px;
  padding-right: 17px;
  border: 1px solid #7a8798;
  background: #fff;
  color: #111;
}
.picker input { flex: 1; border: 0; padding: 0 2px; background: none; font: 15px/20px "Liberation Mono", monospace; }
.legend {
  display: flex;
  align-items: center;
  gap: 15px;
  height: 30px;
  padding: 0 4px 3px;
  border: solid #8796ad;
  border-width: 1px 0;
  background: #eef2f8;
}
.k1 { color: #808080; } .k2 { color: #000080; } .k3 { color: #0a8a0a; } .k4 { color: #000; }
.k5 { color: #0b7070; } .k6 { color: #e00000; } .k7 { color: #800080; } .k8 { color: #a03050; }
.keys { margin: 0 35px 0 auto; }
.legend a { color: #0b8080; text-decoration: none; }

/* overlays of the remote client */
.floatbar {
  position: absolute;
  right: 0;
  top: 14px;
  width: 18px;
  height: 108px;
  padding: 34px 0 0 4px;
  border: 2px solid #fff;
  border-right: 0;
  border-radius: 8px 0 0 8px;
  outline: 1px solid #aaa;
  background: linear-gradient(#808080 10px, rgba(255, 255, 255, .7) 10px);
}
.floatbar i { display: block; height: 1px; margin-bottom: 8px; background: #9aa5b8; }
.dot { position: absolute; right: 12px; top: 94px; width: 7px; height: 25px; border-radius: 0 7px 7px 0; background: #f6cb25; }
.drawer {
  position: absolute;
  right: 0;
  top: 1268px;
  width: 36px;
  height: 48px;
  padding-left: 15px;
  border-radius: 22px 0 0 22px;
  background: linear-gradient(90deg, #7aa2f0, #3f86fb 50%);
}
```
